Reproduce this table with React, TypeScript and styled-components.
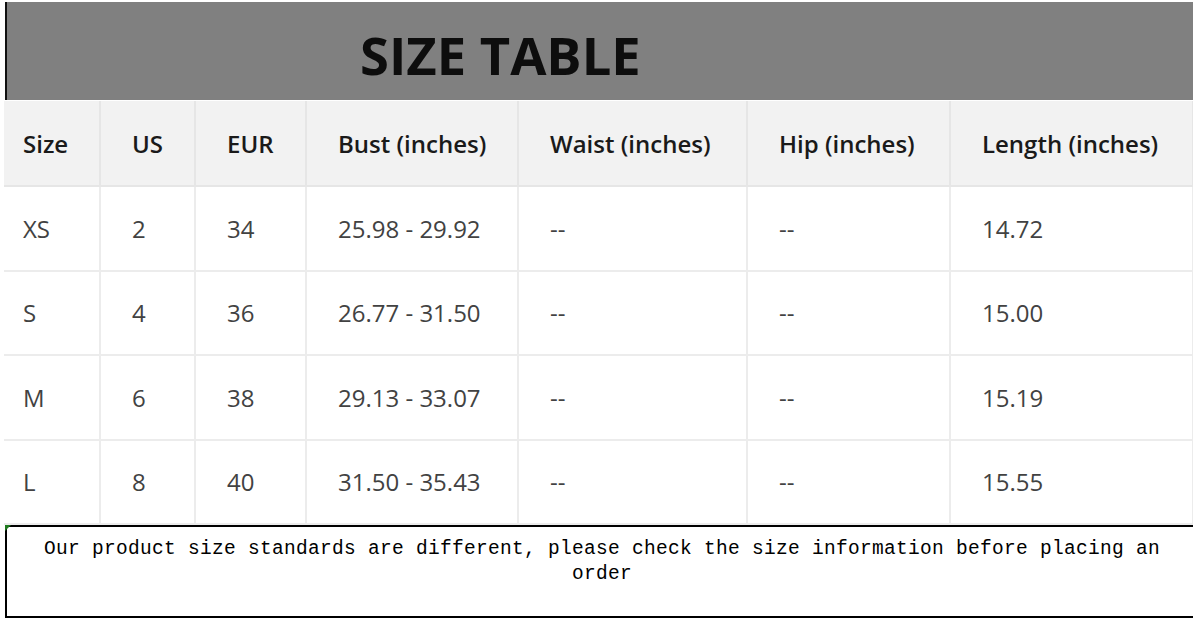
import React from "react";
import styled, { createGlobalStyle } from "styled-components";

const GlobalStyle = createGlobalStyle`
  html, body {
    margin: 0;
    padding: 0;
    background: #ffffff;
  }
  body {
    width: 1193px;
    height: 618px;
    overflow: hidden;
  }
`;

const Page = styled.div`
  display: flex;
  flex-direction: column;
  width: 1193px;
  padding-top: 2px;
`;

const TitleBar = styled.div`
  display: flex;
  align-items: center;
  margin-left: 5px;
  height: 98px;
  padding-left: 353px;
  background: #808080;
  border-left: 2px solid #111111;
  box-sizing: border-box;
`;

const Title = styled.h1`
  margin: 0;
  padding-top: 8px;
  font-family: "Open Sans", "Liberation Sans", sans-serif;
  font-weight: 700;
  font-size: 52.5px;
  line-height: 1;
  color: #0d0d0d;
`;

const Table = styled.table`
  margin: 1px 0 0 4px;
  width: 1189px;
  border-collapse: collapse;
  table-layout: fixed;
  font-family: "Open Sans", "Noto Sans", sans-serif;
  font-size: 24px;
`;

const HeadCell = styled.th<{ $first?: boolean }>`
  height: 84px;
  padding: 0 0 0 ${(p) => (p.$first ? "19px" : "31px")};
  text-align: left;
  font-weight: 600;
  color: #1a1a1a;
  background: #f2f2f2;
  border: 2px solid #e6e6e6;
  border-top: none;
  border-left: ${(p) => (p.$first ? "none" : "2px solid #e6e6e6")};
  white-space: nowrap;
`;

const Cell = styled.td<{ $first?: boolean }>`
  height: 82.5px;
  padding: 0 0 0 ${(p) => (p.$first ? "19px" : "31px")};
  font-weight: 400;
  color: #424242;
  background: #ffffff;
  border: 2px solid #ececec;
  border-left: ${(p) => (p.$first ? "none" : "2px solid #ececec")};
  white-space: nowrap;
`;

const NoteBox = styled.div`
  position: relative;
  margin-left: 5px;
  width: 1190px;
  height: 93px;
  box-sizing: border-box;
  border: 2px solid #000000;
  border-right: none;
  padding: 10px 12px 0 14px;
  text-align: center;
  font-family: "Liberation Mono", "DejaVu Sans Mono", monospace;
  font-size: 19.5px;
  letter-spacing: 0.3px;
  line-height: 25px;
  color: #000000;

  &::before {
    content: "";
    position: absolute;
    left: -2px;
    top: -2px;
    border-top: 6px solid #1f7a1f;
    border-right: 6px solid transparent;
  }
`;

const columns = [
  { label: "Size", width: 96 },
  { label: "US", width: 95 },
  { label: "EUR", width: 111 },
  { label: "Bust (inches)", width: 212 },
  { label: "Waist (inches)", width: 229 },
  { label: "Hip (inches)", width: 203 },
  { label: "Length (inches)", width: 243 },
];

const rows = [
  ["XS", "2", "34", "25.98 - 29.92", "--", "--", "14.72"],
  ["S", "4", "36", "26.77 - 31.50", "--", "--", "15.00"],
  ["M", "6", "38", "29.13 - 33.07", "--", "--", "15.19"],
  ["L", "8", "40", "31.50 - 35.43", "--", "--", "15.55"],
];

const App: React.FC = () => {
  return (
    <>
      <GlobalStyle />
      <Page>
        <TitleBar>
          <Title>SIZE TABLE</Title>
        </TitleBar>
        <Table>
          <colgroup>
            {columns.map((c) => (
              <col key={c.label} style={{ width: c.width }} />
            ))}
          </colgroup>
          <thead>
            <tr>
              {columns.map((c, i) => (
                <HeadCell key={c.label} $first={i === 0}>
                  {c.label}
                </HeadCell>
              ))}
            </tr>
          </thead>
          <tbody>
            {rows.map((row) => (
              <tr key={row[0]}>
                {row.map((value, i) => (
                  <Cell key={i} $first={i === 0}>
                    {value}
                  </Cell>
                ))}
              </tr>
            ))}
          </tbody>
        </Table>
        <NoteBox>
          Our product size standards are different, please check the size
          information before placing an order
        </NoteBox>
      </Page>
    </>
  );
};

export default App;
